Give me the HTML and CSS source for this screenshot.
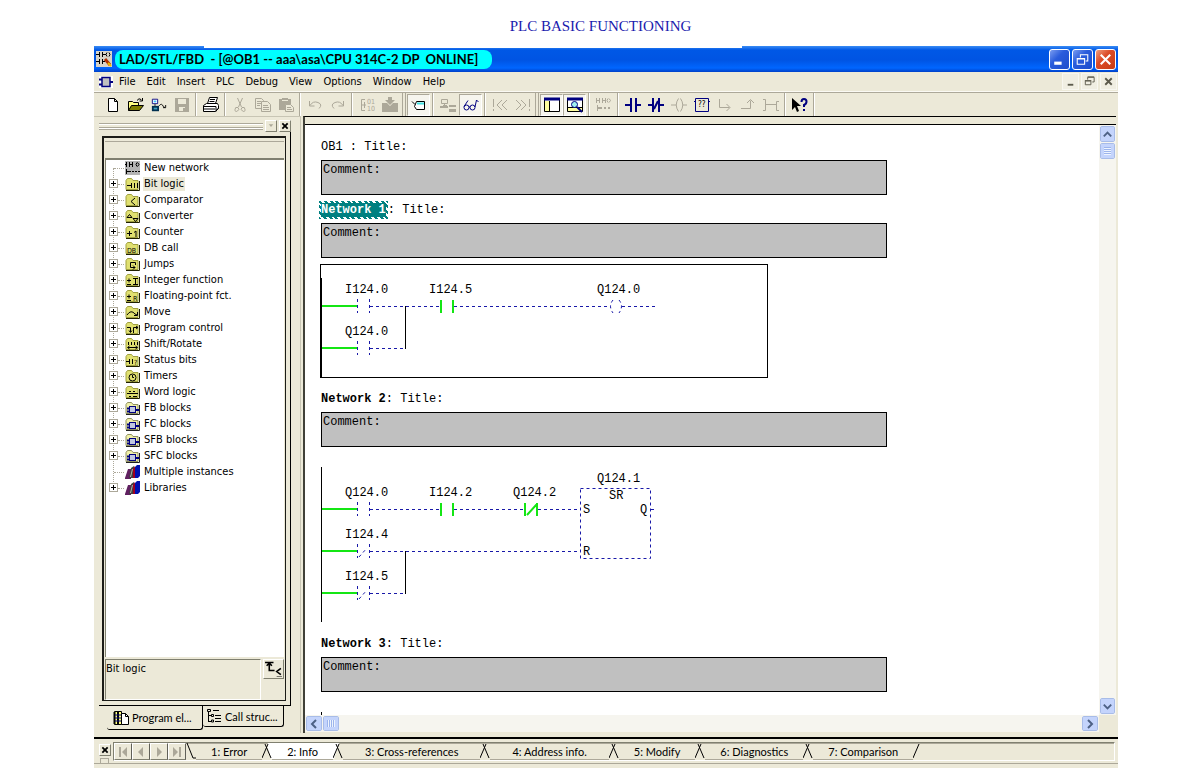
FILE: index.html
```html
<!DOCTYPE html>
<html lang="en">
  <head>
    <meta charset="UTF-8" />
    <meta name="viewport" content="width=device-width, initial-scale=1.0" />
    <title>PLC Basic Functioning</title>
    <link rel="stylesheet" href="styles.css">
  </head>
  <body>
    <!-- icon sprite -->
    <svg class="sprite" aria-hidden="true">
      <symbol id="block" viewBox="0 0 14 12">
        <path d="M0 3.500h3M0 8.500h3M11 6h3" stroke="#000080" stroke-width="2" />
        <rect x="3" y="1.500" width="8" height="9" fill="#c0c0c0" stroke="#000080" stroke-width="1.500" />
      </symbol>
      <symbol id="folder" viewBox="0 0 15 14">
        <path d="M1 12.500V3.500L2.500 1.500h4L8 3.500h5v9z" fill="#e0e070" stroke="#a0a040" />
        <path d="M1 13.500h13.500V4" fill="none" stroke="#202000" />
      </symbol>
      <symbol id="folder-gray" viewBox="0 0 15 14">
        <path d="M1 12.500V3.500L2.500 1.500h4L8 3.500h5v9z" fill="#f0f0a8" stroke="#909060" />
        <path d="M1 13.500h13.500V4" fill="none" stroke="#202020" />
        <path d="M2 7.500h2M2 10.500h2M11 9h3" stroke="#000080" stroke-width="2" />
        <rect x="4.500" y="5.500" width="6" height="6" fill="#c0c8e0" stroke="#000080" />
      </symbol>
      <symbol id="books" viewBox="0 0 15 14">
        <path d="M0 13L3 4h3v10H0z" fill="#602060" />
        <path d="M4 13L6 3l3-2v12z" fill="#404040" />
        <path d="M8 13V4l2-3v12z" fill="#a00020" />
        <path d="M10 13V2l2-2h3v11l-2 2z" fill="#0010b0" />
        <path d="M5.500 12l2-8" stroke="#b0b0b0" />
      </symbol>
      <symbol id="network" viewBox="0 0 15 14">
        <rect width="15" height="14" fill="#b4b4b4" />
        <path d="M0 3.500h2M1.500 1v5M4.500 1v5M4 3.500h3M7.500 1v5M12 1.500q-2 2 0 4M12.500 1.500q3 2 0 4M1.500 8v5M1 10.500h5M7 10.500h2M10 10.500h2M13 10.500h2" stroke="#000" fill="none" />
      </symbol>
    </svg>

    <h1 class="page-title">PLC BASIC FUNCTIONING</h1>

    <div class="window">
      <header class="title-bar">
        <svg class="app-icon" viewBox="0 0 16 16" aria-hidden="true">
          <rect width="16" height="16" fill="#d8d4c8" />
          <path d="M0 3.500h3M3.500 1v5M6.500 1v5M7 3.500h3M11 1.500q-2 2 0 4M13 1.500q2 2 0 4M0 10.500h3M3.500 8v5M6.500 8v5M7 10.500h2" stroke="#000" fill="none" />
          <path d="M9 8l5 6" stroke="#b03000" stroke-width="3" />
          <path d="M12 12l3 3" stroke="#f0c000" stroke-width="2" />
        </svg>
        <span class="caption">LAD/STL/FBD  - [@OB1 -- aaa\asa\CPU 314C-2 DP  ONLINE]</span>
        <div class="window-buttons">
          <button aria-label="Minimize"><svg viewBox="0 0 18 18"><path d="M4 12.500h7" stroke-width="3" /></svg></button>
          <button aria-label="Restore"><svg viewBox="0 0 18 18"><path d="M4 8h7v5.500H4zM4 8.500h7M7 7V4.500h7v6h-2M7 4.500h7" /></svg></button>
          <button aria-label="Close" class="close"><svg viewBox="0 0 18 18"><path d="M4.500 4.500l9 9M13.500 4.500l-9 9" stroke-width="2" /></svg></button>
        </div>
      </header>

      <nav class="menu-bar">
        <svg class="doc-icon" viewBox="0 0 14 12" aria-hidden="true"><use href="#block" /></svg>
        <button>File</button>
        <button>Edit</button>
        <button>Insert</button>
        <button>PLC</button>
        <button>Debug</button>
        <button>View</button>
        <button>Options</button>
        <button>Window</button>
        <button>Help</button>
        <div class="mdi-buttons">
          <button aria-label="Minimize document"><svg viewBox="0 0 14 14"><path d="M4 10.500h6" stroke-width="2" /></svg></button>
          <button aria-label="Restore document"><svg viewBox="0 0 14 14"><path d="M2.500 6.500h6v4h-6zM2 6h7M5 5V2.500h7v5h-2M5 2h7" /></svg></button>
          <button aria-label="Close document"><svg viewBox="0 0 14 14"><path d="M3.500 3.500l7 7M10.500 3.500l-7 7" stroke-width="2" /></svg></button>
        </div>
      </nav>

      <div class="toolbar">
        <button aria-label="New"><svg viewBox="0 0 16 16"><path d="M3.500 1.500h6l3 3v10h-9zM9.500 1.500v3h3" fill="#fff" stroke="#000" /></svg></button>
        <button aria-label="Open"><svg viewBox="0 0 16 16"><path d="M.5 13.500v-9h4l1 1h5v3" fill="#ffff80" stroke="#000" /><path d="M.5 13.500l3-5h12l-4 5z" fill="#808000" stroke="#000" /><path d="M9 3.500q2-3 4-1l1 1M14.500 1v3h-3" fill="none" stroke="#000" /></svg></button>
        <button aria-label="Open online"><svg viewBox="0 0 18 16"><path d="M1.500 1.500h6v5h-6z" fill="#fff" stroke="#000080" /><path d="M3 3h3v2H3z" fill="#40c0ff" /><path d="M4.500 7v2" stroke="#000" /><path d="M1 9h8v6H1z" fill="#003050" /><path d="M3 11h4v2H3z" fill="#40a0c0" /><path d="M9 9q3-4 5 1l2 1M16.500 8v3h-3" fill="none" stroke="#000" /></svg></button>
        <button aria-label="Save" disabled><svg viewBox="0 0 16 16"><path d="M1 1h14v14H1z" fill="#aca899" /><path d="M4 2h8v5H4zM5 10h6v4H5z" fill="#ece9d8" /><path d="M9 11h2v3H9z" fill="#aca899" /></svg></button>
        <span class="separator"></span>
        <button aria-label="Print"><svg viewBox="0 0 16 16"><path d="M4.500 6.500l2-6h8l-2 6" fill="#fff" stroke="#000" /><path d="M7 2.500h5M6.500 4.500h5" stroke="#000" /><path d="M.5 8.500l3-2h11l1 2v3l-3 3h-12z" fill="#fff" stroke="#000" /><path d="M1 9.500h12M1 12h11M13 9.500v5M13.500 13l2-2" stroke="#000" /></svg></button>
        <span class="separator"></span>
        <button aria-label="Cut" disabled><svg viewBox="0 0 16 16"><path d="M5.500 1l4 9M10.500 1l-4 9M6 10.500q-3-1-3 2t2.500 1.500T6 10.500zM10 10.500q3-1 3 2t-2.500 1.500-.5-3.500z" class="off" /></svg></button>
        <button aria-label="Copy" disabled><svg viewBox="0 0 16 16"><path d="M.5 1.500h6l2 2v8h-8zM2 4.500h4M2 6.500h5M2 8.500h3" class="off" /><path d="M6.500 4.500h6l3 3v7h-9z" fill="#ece9d8" stroke="#aca899" /><path d="M8 8.500h5M8 10.500h6M8 12.500h6" class="off" /></svg></button>
        <button aria-label="Paste" disabled><svg viewBox="0 0 16 16"><path d="M1 2h3V1h6v1h3v11H1z" fill="#aca899" /><path d="M4 3.500h6" stroke="#ece9d8" /><path d="M7.500 7.500h5l3 3v4h-8z" fill="#ece9d8" stroke="#aca899" /><path d="M9 10.500h4M9 12.500h5" class="off" /></svg></button>
        <span class="separator"></span>
        <button aria-label="Undo" disabled><svg viewBox="0 0 16 16"><path d="M2.500 4v5h5M3 8.500q3-5 8-3t1 6" class="off" /></svg></button>
        <button aria-label="Redo" disabled><svg viewBox="0 0 16 16"><path d="M13.500 4v5h-5M13 8.500q-3-5-8-3t-1 6" class="off" /></svg></button>
        <span class="separator"></span>
        <button aria-label="Compile" disabled><svg viewBox="0 0 16 16"><path d="M6 2.500H2.500v11H6M2 8h5M5.500 5v6" class="off" /><text x="8" y="7" class="tiny off-text">01</text><text x="8" y="14" class="tiny off-text">10</text></svg></button>
        <button aria-label="Download" disabled><svg viewBox="0 0 16 16"><path d="M0 6h5l3 3 3-3h5v9H0zM6 0h4v3h3L8 8 3 3h3z" fill="#aca899" /></svg></button>
        <span class="separator double"></span>
        <button aria-label="Symbol information" class="pressed"><svg viewBox="0 0 16 16"><path d="M5.500 4.500h8v8h-8l-2-3zM1 4.500l3 3" fill="#fff" stroke="#000" /><path d="M6 6.500h7" stroke="#40e0e0" stroke-width="2" /></svg></button>
        <span class="separator"></span>
        <button aria-label="Online partner" disabled><svg viewBox="0 0 16 16"><path d="M1.500 2.500h6v4h-6zM3 8.500h4M4.500 7v2" class="off" /><path d="M0 9h8v2H0zM9 8h7v2H9zM9 12h7v3H9z" fill="#aca899" /></svg></button>
        <button aria-label="Monitor" class="pressed"><svg viewBox="0 0 16 16"><circle cx="3.500" cy="10.500" r="2.500" class="blue thin" /><circle cx="9.500" cy="10.500" r="2.500" class="blue thin" /><path d="M1 9.500l4-6M6 10h1M12 10l1.500-7 2 2" class="blue thin" /></svg></button>
        <span class="separator"></span>
        <button aria-label="Previous error" disabled><svg viewBox="0 0 16 16"><path d="M1.500 2v8M1.500 12v2M10 3L5 8l5 5M15 3l-5 5 5 5" class="off" /></svg></button>
        <button aria-label="Next error" disabled><svg viewBox="0 0 16 16"><path d="M14.500 2v8M14.500 12v2M6 3l5 5-5 5M1 3l5 5-5 5" class="off" /></svg></button>
        <span class="separator double"></span>
        <button aria-label="Overviews" class="pressed"><svg viewBox="0 0 16 16"><path d="M.5 1.500h15v13H.5z" fill="#fff" stroke="#000" /><path d="M0 2h16" stroke="#000080" stroke-width="3" /><path d="M1 4h4v10H1z" fill="#ffffa0" /><path d="M5.500 4v10" stroke="#000" /></svg></button>
        <button aria-label="Details" class="pressed"><svg viewBox="0 0 16 16"><path d="M.5 1.500h15v13H.5z" fill="#fff" stroke="#000" /><path d="M0 2h16" stroke="#000080" stroke-width="3" /><path d="M1 11h14v3H1z" fill="#ffffa0" /><path d="M1 10.500h14" stroke="#000" /><circle cx="7.500" cy="7.500" r="3" fill="#a0f0f0" stroke="#000080" /><path d="M10 10l5 5" stroke="#000080" stroke-width="2" /></svg></button>
        <span class="separator"></span>
        <button aria-label="New network" disabled><svg viewBox="0 0 16 16"><path d="M.5 1v5M0 3.500h4M3.500 1v5M6.500 1v5M6 3.500h4M9.500 1v5M12 1.500q-2 2 0 4M13 1.500q3 2 0 4M1.500 8v6" class="off" /><path d="M1 11h5M8 11h2M12 11h2" class="off" stroke-width="2" /></svg></button>
        <span class="separator"></span>
        <button aria-label="Normally open contact"><svg viewBox="0 0 16 16"><path d="M0 8h5M11 8h5M6 1v14M11 1v14" class="blue" /></svg></button>
        <button aria-label="Normally closed contact"><svg viewBox="0 0 16 16"><path d="M0 8h5M11 8h5M5 1v14M11 1v14M6 12l4-8" class="blue" /></svg></button>
        <button aria-label="Coil" disabled><svg viewBox="0 0 16 16"><path d="M0 8h5M12 8h4M7.500 1.500Q3 8 7.500 14.500M9.500 1.500q4.500 6.500 0 13" class="off" /></svg></button>
        <button aria-label="Empty box"><svg viewBox="0 0 16 16"><path d="M1.500 1.500h13v13h-13zM0 4.500h2M14 4.500h2" class="blue thin" /><text x="4" y="10" class="tiny">??</text></svg></button>
        <button aria-label="Open branch" disabled><svg viewBox="0 0 16 16"><path d="M2.500 2v8.500h10M9.500 7l3.500 3.500L9.500 14" class="off" /></svg></button>
        <button aria-label="Close branch" disabled><svg viewBox="0 0 16 16"><path d="M1 11.500h9.500v-8M7 6l3.500-3.500L14 6" class="off" /></svg></button>
        <button aria-label="Connection" disabled><svg viewBox="0 0 16 16"><path d="M0 2.500h2.500v11H0M3 7.500h10M16 4.500h-2.500v9H16" class="off" /></svg></button>
        <span class="separator"></span>
        <button aria-label="Help"><svg viewBox="0 0 16 16"><path d="M0 1v12l3-3 2 5 2-1-2-5h4z" /><path d="M9.500 5q0-3 2.500-3t2.500 2.500T12 8v2M12 12v2" class="blue" /></svg></button>
        <span class="separator"></span>
      </div>

      <main class="workspace">
        <aside class="side-pane">
          <div class="pane-grip">
            <span class="grip-lines"></span>
            <button aria-label="Pane menu"><svg viewBox="0 0 9 9"><path d="M2 2.500h5L4.500 5.500z" fill="#aca899" /></svg></button>
            <button aria-label="Close pane"><svg viewBox="0 0 9 9"><path d="M1.500 1.500l6 6M7.500 1.500l-6 6" stroke="#000" stroke-width="2" /></svg></button>
          </div>
          <div class="pane-frame">
            <div class="pane-inner">
              <div class="pane-header"></div>
              <div class="tree-box">
                <ul class="tree">
                  <li class="leaf"><svg viewBox="0 0 15 14"><use href="#network" /></svg><span>New network</span></li>
                  <li><button aria-label="Expand"></button><svg viewBox="0 0 15 14"><use href="#folder" /><path d="M2 8.500h4M6.500 6v5M9.500 6v5M12.500 6v5" /></svg><span class="selected">Bit logic</span></li>
                  <li><button aria-label="Expand"></button><svg viewBox="0 0 15 14"><use href="#folder" /><path d="M10 5L6 8.500l4 3.500" /></svg><span>Comparator</span></li>
                  <li><button aria-label="Expand"></button><svg viewBox="0 0 15 14"><use href="#folder" /><path d="M2 8.500h5L4.500 5.500zM8 9.500h5l-2.500 3z" /></svg><span>Converter</span></li>
                  <li><button aria-label="Expand"></button><svg viewBox="0 0 15 14"><use href="#folder" /><path d="M2 8.500h5M4.500 6v5M9 7.500l2-1.500v6" /></svg><span>Counter</span></li>
                  <li><button aria-label="Expand"></button><svg viewBox="0 0 15 14"><use href="#folder" /><text x="2" y="12">DB</text></svg><span>DB call</span></li>
                  <li><button aria-label="Expand"></button><svg viewBox="0 0 15 14"><use href="#folder" /><path d="M10.500 8V5.500h-5v5H10M8 8.500l2 2-2 2" /></svg><span>Jumps</span></li>
                  <li><button aria-label="Expand"></button><svg viewBox="0 0 15 14"><use href="#folder" /><path d="M2 7.500h4M4 5.500v4M2 11.500h4M8 5.500h5M10.500 5v6M8 11.500h5" /></svg><span>Integer function</span></li>
                  <li><button aria-label="Expand"></button><svg viewBox="0 0 15 14"><use href="#folder" /><path d="M2 7.500h4M4 5.500v4M2 11.500h4" /><text x="8" y="12">R</text></svg><span>Floating-point fct.</span></li>
                  <li><button aria-label="Expand"></button><svg viewBox="0 0 15 14"><use href="#folder" /><path d="M2 10q4-6 8-1l2 1M12.500 7v3.500H9" /></svg><span>Move</span></li>
                  <li><button aria-label="Expand"></button><svg viewBox="0 0 15 14"><use href="#folder" /><path d="M2 6.500h3.500V11M4 9.500l1.500 2L7 9.500M8.500 12V6.500H13M11 5l2 1.500L11 8" /></svg><span>Program control</span></li>
                  <li><button aria-label="Expand"></button><svg viewBox="0 0 15 14"><use href="#folder" /><path d="M3.500 5v3M6.500 5v3M9.500 5v3M12.500 5v3M3 10.500h9M4.500 9l-2 1.500 2 1.500M10.500 9l2 1.500-2 1.500" /></svg><span>Shift/Rotate</span></li>
                  <li><button aria-label="Expand"></button><svg viewBox="0 0 15 14"><use href="#folder" /><path d="M1 8.500h3M4.500 6v5M7.500 6v5" /><text x="9" y="12">?</text></svg><span>Status bits</span></li>
                  <li><button aria-label="Expand"></button><svg viewBox="0 0 15 14"><use href="#folder" /><circle cx="7.500" cy="8.500" r="3.500" /><path d="M7.500 6v2.500H9" /></svg><span>Timers</span></li>
                  <li><button aria-label="Expand"></button><svg viewBox="0 0 15 14"><use href="#folder" /><path d="M4 6.500h2M8 6.500h2M2 8.500h11M4 11.500h2M8 11.500h4" /></svg><span>Word logic</span></li>
                  <li><button aria-label="Expand"></button><svg viewBox="0 0 15 14"><use href="#folder-gray" /></svg><span>FB blocks</span></li>
                  <li><button aria-label="Expand"></button><svg viewBox="0 0 15 14"><use href="#folder-gray" /></svg><span>FC blocks</span></li>
                  <li><button aria-label="Expand"></button><svg viewBox="0 0 15 14"><use href="#folder-gray" /></svg><span>SFB blocks</span></li>
                  <li><button aria-label="Expand"></button><svg viewBox="0 0 15 14"><use href="#folder-gray" /></svg><span>SFC blocks</span></li>
                  <li class="leaf"><svg viewBox="0 0 15 14"><use href="#books" /></svg><span>Multiple instances</span></li>
                  <li><button aria-label="Expand"></button><svg viewBox="0 0 15 14"><use href="#books" /></svg><span>Libraries</span></li>
                </ul>
              </div>
              <div class="pane-info">
                <div class="info-text">Bit logic</div>
                <button aria-label="Show help text"><svg viewBox="0 0 18 16"><path d="M1 1.500h8M5 2v7h5M2.500 4.500L5 2l2.500 2.500M16 7l-4 3 4 3M12 15.500h5" fill="none" stroke="#000" stroke-width="1.500" /></svg></button>
              </div>
            </div>
          </div>
          <div class="pane-tabs">
            <button class="active"><svg viewBox="0 0 16 16"><path d="M1.500 1.500h7v13h-7z" fill="#ffff80" stroke="#000" /><path d="M1.500 2v12M5 2v12" stroke="#000" stroke-width="2" /><path d="M2 5h6M2 8h6M2 11h6" stroke="#000080" /><path d="M8.500 3.500h4l3 3v8h-7z" fill="#fff" stroke="#000" /><path d="M12.500 3.500v3h3" fill="none" stroke="#000" /></svg>Program el...</button>
            <button><svg viewBox="0 0 16 16"><path d="M1.500 1.500h3v2h-3zM2.500 4v10M3 7.500h2M3 13.500h2M5.500 6.500h2v2h-2zM5.500 12h2v2h-2zM7 2.500h6M9 7.500h6M9 10.500h6M9 13.500h6" fill="none" stroke="#000" /></svg>Call struc...</button>
          </div>
        </aside>

        <section class="editor">
          <div class="sheet">
            <h2>OB1 : Title:</h2>
            <div class="comment">Comment:</div>

            <h2><b class="marked">Network 1</b>: Title:</h2>
            <div class="comment">Comment:</div>
            <svg class="ladder framed" width="448" height="114">
              <path class="rail" d="M1.500 14v100" />
              <path class="live" d="M2 42h35M121 36v13M133 36v13" />
              <path class="wire" d="M50 42.500h70M134 42.500h155M302 42.500h33M50 84.500h36" />
              <path class="contact" d="M37.500 35v14M49.500 35v14M37.500 77v14M49.500 77v14M293 36q-5 6 0 13M299 36q5 6 0 13" />
              <path class="live" d="M2 84h35" />
              <path class="branch" d="M85.500 42v43" />
              <text x="25" y="29">I124.0</text>
              <text x="109" y="29">I124.5</text>
              <text x="277" y="29">Q124.0</text>
              <text x="25" y="71">Q124.0</text>
            </svg>

            <h2><b>Network 2</b>: Title:</h2>
            <div class="comment">Comment:</div>
            <svg class="ladder" width="448" height="182">
              <path class="branch" d="M1.500 20v155" />
              <path class="live" d="M2 62h35M121 56v13M133 56v13M205 56v13M217 56v13M207 68l10-11M2 104h35M2 146h35" />
              <path class="wire" d="M50 62.500h70M134 62.500h70M218 62.500h42M331 62.500h6M50 104.500h210M50 146.500h36" />
              <path class="contact" d="M37.500 55v14M49.500 55v14M37.500 97v14M49.500 97v14M37.500 139v14M49.500 139v14M39 110l8-9M39 152l8-9" />
              <path class="branch" d="M85.500 104v43" />
              <rect class="wire" x="260.500" y="41.500" width="70" height="70" />
              <text x="25" y="49">Q124.0</text>
              <text x="109" y="49">I124.2</text>
              <text x="193" y="49">Q124.2</text>
              <text x="277" y="35">Q124.1</text>
              <text x="289" y="52">SR</text>
              <text x="263" y="66">S</text>
              <text x="320" y="66">Q</text>
              <text x="263" y="108">R</text>
              <text x="25" y="91">I124.4</text>
              <text x="25" y="133">I124.5</text>
            </svg>

            <h2><b>Network 3</b>: Title:</h2>
            <div class="comment">Comment:</div>
            <svg class="ladder" width="448" height="155">
              <path class="branch" d="M1.500 20v135" />
            </svg>
          </div>
          <div class="scroll vertical">
            <button aria-label="Scroll up"><svg viewBox="0 0 14 14"><path d="M3 9l4-4 4 4" /></svg></button>
            <span class="thumb"></span>
            <button aria-label="Scroll down" class="end"><svg viewBox="0 0 14 14"><path d="M3 5l4 4 4-4" /></svg></button>
          </div>
          <div class="scroll horizontal">
            <button aria-label="Scroll left"><svg viewBox="0 0 14 14"><path d="M9 3L5 7l4 4" /></svg></button>
            <span class="thumb"></span>
            <button aria-label="Scroll right" class="end"><svg viewBox="0 0 14 14"><path d="M5 3l4 4-4 4" /></svg></button>
          </div>
          <div class="corner"></div>
        </section>
      </main>

      <footer class="output">
        <div class="output-grip">
          <button aria-label="Close output"><svg viewBox="0 0 9 9"><path d="M1.500 1.500l6 6M7.500 1.500l-6 6" stroke="#000" stroke-width="2" /></svg></button>
          <span class="grip-stub"></span>
        </div>
        <div class="output-tabs">
          <div class="tab-nav">
            <button aria-label="First tab"><svg viewBox="0 0 16 14"><path d="M4 2h2v10H4zM12 2v10L7 7z" /></svg></button>
            <button aria-label="Previous tab"><svg viewBox="0 0 16 14"><path d="M10 2v10L5 7z" /></svg></button>
            <button aria-label="Next tab"><svg viewBox="0 0 16 14"><path d="M6 2v10l5-5z" /></svg></button>
            <button aria-label="Last tab"><svg viewBox="0 0 16 14"><path d="M4 2v10l5-5zM10 2h2v10h-2z" /></svg></button>
          </div>
          <svg class="slash" viewBox="0 0 10 16"><path d="M1 0l6 15h3" /></svg>
          <button>1: Error</button>
          <svg class="slash" viewBox="0 0 10 16"><path class="fill" d="M5 2L9 16h2V0H6z" /><path d="M0 15L6 1M3 1l6 14" /></svg>
          <button class="active">2: Info</button>
          <svg class="slash" viewBox="0 0 10 16"><path class="fill" d="M0 0h6L1 16H0z" /><path d="M0 15L6 1M3 1l6 14" /></svg>
          <button class="wide">3: Cross-references</button>
          <svg class="slash" viewBox="0 0 10 16"><path d="M0 15L6 1M3 1l6 14" /></svg>
          <button class="wide">4: Address info.</button>
          <svg class="slash" viewBox="0 0 10 16"><path d="M0 15L6 1M3 1l6 14" /></svg>
          <button>5: Modify</button>
          <svg class="slash" viewBox="0 0 10 16"><path d="M0 15L6 1M3 1l6 14" /></svg>
          <button>6: Diagnostics</button>
          <svg class="slash" viewBox="0 0 10 16"><path d="M0 15L6 1M3 1l6 14" /></svg>
          <button>7: Comparison</button>
          <svg class="slash" viewBox="0 0 10 16"><path d="M0 15L6 1" /></svg>
        </div>
      </footer>
    </div>
  </body>
</html>
```
FILE: styles.css
```css
*{
  box-sizing: border-box;
}
body{
  margin: 0;
  min-height: 100vh;
  display: flex;
  flex-direction: column;
  background-color: white;
  color: black;
  font-family: "DejaVu Sans Condensed", Tahoma, sans-serif;
  font-size: 11px;
}
button{
  margin: 0;
  padding: 0;
  border: none;
  background: none;
  color: inherit;
  font: inherit;
}
svg{
  display: block;
  fill: none;
}
.sprite{
  position: absolute;
  width: 0;
  height: 0;
}
.page-title{
  margin: 0;
  padding: 16px 0 10px 16px;
  color: #1a1aae;
  font-family: "Liberation Serif", "Times New Roman", serif;
  font-size: 15px;
  font-weight: normal;
  line-height: 20px;
  text-align: center;
}
.window{
  flex: 1 0 0;
  min-height: 0;
  margin: 0 67px 0 94px;
  display: flex;
  flex-direction: column;
  background-color: #ece9d8;
}

/* title bar */
.title-bar{
  position: relative;
  height: 26px;
  display: flex;
  align-items: center;
  padding: 0 2px;
  background: linear-gradient(#3a8cf4, #0058e6 4px, #0054e3 14px, #0066ff 22px, #0040c8);
}
.title-bar::before{
  content: "";
  position: absolute;
  top: 0;
  left: 110px;
  right: 376px;
  height: 2px;
  background-color: white;
}
.app-icon{
  width: 16px;
  height: 16px;
  margin-right: 3px;
}
.caption{
  height: 19px;
  padding: 0 14px 0 4px;
  border-radius: 8px;
  background-color: #00ffff;
  font-family: Lato, "Trebuchet MS", sans-serif;
  font-size: 13px;
  font-weight: bold;
  line-height: 18px;
  white-space: pre;
}
.window-buttons{
  display: flex;
  gap: 2px;
  margin-left: auto;
}
.window-buttons button{
  width: 21px;
  height: 21px;
  border: 1px solid white;
  border-radius: 3px;
  background: linear-gradient(135deg, #7a9cf0, #2a5cdc 40%, #1c4ccc);
}
.window-buttons .close{
  background: linear-gradient(135deg, #f0a080, #dc4c28 40%, #c83c14);
}
.window-buttons path{
  stroke: white;
}

/* menu */
.menu-bar{
  display: flex;
  align-items: center;
  height: 20px;
  padding: 0 1px 0 5px;
  border-bottom: 1px solid #fbfaf4;
}
.doc-icon{
  width: 14px;
  height: 12px;
  margin-right: 1px;
  background-color: white;
}
.menu-bar > button{
  height: 18px;
  padding: 0 6px 0 5px;
}
.mdi-buttons{
  display: flex;
  gap: 2px;
  margin-left: auto;
}
.mdi-buttons button{
  width: 17px;
  height: 17px;
  padding: 1px;
  border: 1px solid #f8f7f0;
  background-color: #f0eee2;
}
.mdi-buttons path{
  stroke: #5c5a4c;
}

/* toolbar */
.toolbar{
  display: flex;
  align-items: center;
  height: 24px;
  padding-left: 7px;
  border-top: 1px solid #aca899;
}
.toolbar button{
  width: 23px;
  height: 22px;
  display: flex;
  align-items: center;
  justify-content: center;
}
.toolbar svg{
  width: 16px;
  height: 16px;
}
.toolbar path:not([fill]):not([class]){
  fill: black;
}
.toolbar path[stroke]:not([fill]){
  fill: none;
}
.toolbar .pressed{
  border: 1px solid;
  border-color: #aca899 white white #aca899;
  background-color: #f6f5ee;
}
.separator{
  width: 2px;
  height: 23px;
  margin: 0 2px;
  border-left: 1px solid #aca899;
  border-right: 1px solid white;
}
.separator.double{
  width: 4px;
  margin: 0 1px;
  border-right: 1px solid #aca899;
}
.off{
  stroke: #aca899;
}
.blue{
  stroke: #000080;
  stroke-width: 2;
}
.blue.thin{
  stroke-width: 1;
}
.tiny{
  fill: black;
  font-size: 8px;
}
.off-text{
  fill: #aca899;
  font-size: 7px;
}

/* workspace */
.workspace{
  flex: 1;
  min-height: 0;
  display: flex;
}
.side-pane{
  flex: none;
  width: 207px;
  padding: 3px 9px 0 5px;
  display: flex;
  flex-direction: column;
  border-top: 1px solid #c8c5b4;
  border-right: 1px solid #c8c5b4;
}
.pane-grip{
  display: flex;
  align-items: center;
  gap: 2px;
  height: 12px;
}
.grip-lines{
  flex: 1;
  height: 7px;
  border: solid #aca899;
  border-width: 1px 0;
  background: linear-gradient(white 1px, #ece9d8 1px, #ece9d8 3px, #aca899 3px, #aca899 4px, white 4px);
}
.pane-grip button, .output-grip button{
  width: 12px;
  height: 12px;
  padding: 1px;
  border: 1px solid;
  border-color: white #808070 #808070 white;
}
.pane-frame{
  flex: 1;
  min-height: 0;
  display: flex;
  padding: 4px 4px 4px 3px;
  border: solid black;
  border-width: 0 1px 1px 0;
}
.pane-inner{
  flex: 1;
  min-width: 0;
  display: flex;
  flex-direction: column;
  padding: 3px 1px 0;
  border: 2px solid #1c1c18;
  border-right-width: 1px;
  border-bottom-width: 1px;
}
.pane-header{
  height: 17px;
  border-top: 1px solid #aca899;
}
.tree-box{
  flex: 1;
  min-height: 0;
  padding-left: 2px;
  overflow: hidden;
  border-top: 2px solid #808070;
  border-left: 1px solid #808070;
  background-color: white;
}
.tree{
  position: relative;
  margin: 0;
  padding: 0;
  list-style: none;
}
.tree::before{
  content: "";
  position: absolute;
  top: 8px;
  bottom: 8px;
  left: 5px;
  border-left: 1px dotted #aca899;
}
.tree li{
  position: relative;
  display: flex;
  align-items: center;
  height: 16px;
  padding-left: 1px;
}
.tree li::before{
  content: "";
  order: 1;
  width: 6px;
  margin-right: 1px;
  border-top: 1px dotted #aca899;
}
.tree .leaf{
  padding-left: 6px;
}
.tree .leaf::before{
  width: 10px;
}
.tree button{
  width: 9px;
  height: 9px;
  margin-bottom: 1px;
  border: 1px solid #aca899;
  background:
    linear-gradient(black, black) center / 5px 1px no-repeat,
    linear-gradient(black, black) center / 1px 5px no-repeat,
    white;
}
.tree svg{
  order: 2;
  width: 15px;
  height: 14px;
}
.tree li > svg > path, .tree circle{
  stroke: black;
}
.tree text{
  fill: black;
  font-size: 7px;
}
.tree span{
  order: 3;
  margin-left: 3px;
  padding: 0 1px;
  line-height: 14px;
  white-space: nowrap;
}
.tree .selected{
  background-color: #ece9d8;
}
.pane-info{
  display: flex;
  gap: 2px;
  height: 43px;
  padding-top: 2px;
}
.info-text{
  flex: 1;
  padding-top: 2px;
  border: 1px solid;
  border-color: #808070 white white #808070;
}
.pane-info button{
  width: 21px;
  height: 20px;
  border: 1px solid;
  border-color: white #808070 #808070 white;
}
.pane-tabs{
  display: flex;
  align-items: flex-start;
  height: 27px;
  padding-left: 8px;
  font-family: Lato, Arial, sans-serif;
}
.pane-tabs button{
  display: flex;
  align-items: center;
  gap: 3px;
  height: 21px;
  width: 81px;
  padding-left: 3px;
  border: solid black;
  border-width: 0 1px 1px 0;
  border-radius: 0 0 3px 3px;
  white-space: nowrap;
}
.pane-tabs svg{
  width: 16px;
  height: 16px;
}
.pane-tabs .active{
  width: 96px;
  height: 24px;
  padding-left: 6px;
}

/* editor */
.editor{
  flex: 1;
  min-width: 0;
  display: grid;
  grid-template-columns: 1fr 17px;
  grid-template-rows: 1fr 17px;
  margin: 0 2px;
  padding: 8px 0 1px;
  border-left: 2px solid #404038;
  border-top: 1px solid black;
  box-shadow: inset 0 7px #ece9d8, inset 0 8px black;
}
.sheet{
  min-height: 0;
  min-width: 0;
  overflow: hidden;
  padding: 7px 0 0 16px;
  background-color: white;
  font-family: "Liberation Mono", "Courier New", monospace;
  font-size: 12px;
}
.sheet h2{
  margin: 0;
  padding-top: 2px;
  font-size: 12px;
  font-weight: normal;
  line-height: 26px;
}
.marked{
  margin-left: -2px;
  padding: 2px;
  color: white;
  background:
    linear-gradient(#008080, #008080) content-box,
    repeating-linear-gradient(45deg, #008080 0 2px, white 2px 4px);
}
.comment{
  max-width: 566px;
  height: 35px;
  padding: 2px 1px;
  border: 1px solid black;
  background-color: #c0c0c0;
  line-height: 14px;
}
.ladder{
  margin-left: -1px;
}
.ladder text{
  fill: black;
}
.framed{
  margin-top: 6px;
  margin-bottom: 6px;
  outline: 1px solid black;
  outline-offset: -1px;
}
.rail, .branch{
  stroke: black;
}
.live{
  stroke: #14e614;
  stroke-width: 2;
}
.wire, .contact{
  stroke: #1818a8;
  stroke-dasharray: 3 3;
}
.scroll{
  display: flex;
  gap: 1px;
  padding: 1px;
  background-color: #f6f5ef;
}
.vertical{
  flex-direction: column;
}
.scroll button, .thumb{
  width: 15px;
  height: 16px;
  border: 1px solid #f4f7ff;
  border-radius: 2px;
  outline: 1px solid #a8bce8;
  outline-offset: -1px;
  background-color: #c4d4fc;
}
.scroll path{
  stroke: #4d6185;
  stroke-width: 2;
}
.scroll .end{
  margin-top: auto;
}
.horizontal .end{
  margin: 0 0 0 auto;
}
.horizontal button, .horizontal .thumb{
  width: 16px;
  height: 15px;
}
.thumb{
  padding: 3px;
  background-image: repeating-linear-gradient(#eef4fe 0 1px, #9cb4ec 1px 2px);
  background-clip: content-box;
  box-shadow: inset 0 0 0 3px #c4d4fc;
}
.horizontal .thumb{
  background-image: repeating-linear-gradient(90deg, #eef4fe 0 1px, #9cb4ec 1px 2px);
}

/* output tabs */
.output{
  display: flex;
  height: 31px;
  margin-top: 4px;
  padding: 3px 3px 0 5px;
  border-top: 2px solid black;
  box-shadow: inset 0 -4px #ece9d8, inset 0 -5px #aca899;
}
.output-grip{
  width: 14px;
  padding-top: 2px;
}
.output-grip button, .output-grip svg{
  display: block;
}
.grip-stub{
  display: block;
  width: 9px;
  height: 6px;
  margin: 2px 1px 0;
  border: solid #aca899;
  border-width: 1px 1px 0;
}
.output-tabs{
  flex: 1;
  min-width: 0;
  display: flex;
  height: 19px;
  border: 1px solid;
  border-color: #808070 white white #808070;
  font-family: Lato, Arial, sans-serif;
  box-shadow: inset 0 1px #aca899;
}
.tab-nav{
  display: flex;
}
.tab-nav button{
  width: 18px;
  height: 17px;
  border: 1px solid;
  border-color: white #606058 #808070 white;
}
.tab-nav svg{
  height: 14px;
}
.tab-nav path{
  fill: #aca899;
}
.output-tabs > button{
  padding: 0 15px;
  border-bottom: 1px solid #aca899;
  white-space: nowrap;
}
.output-tabs > .wide{
  padding: 0 22px;
}
.output-tabs > .active{
  background-color: white;
}
.slash{
  flex: none;
  width: 10px;
  height: 16px;
}
.slash path{
  stroke: black;
}
.slash .fill{
  fill: white;
  stroke: none;
}
```
